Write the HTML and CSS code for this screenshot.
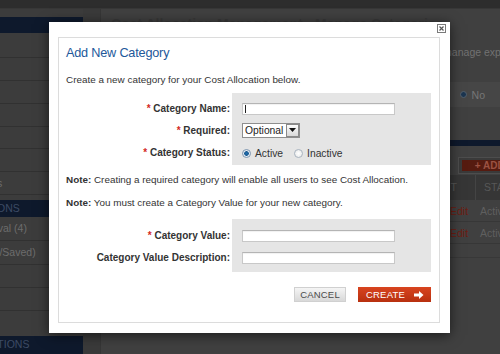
FILE: index.html
```html
<!DOCTYPE html>
<html lang="en">
<head>
<meta charset="utf-8">
<title>Add New Category</title>
<link rel="stylesheet" href="styles.css">
</head>
<body>
<div class="page" aria-hidden="true">
  <div class="topbar"></div>
  <div class="layout">
    <aside class="sidebar">
      <div class="nav-head"></div>
      <ul class="nav-list">
        <li class="nav-item tall">Home</li>
        <li class="nav-item">Expenses</li>
        <li class="nav-item">Reports</li>
        <li class="nav-item">Receipts</li>
        <li class="nav-item short">Settings</li>
        <li class="nav-item">Users</li>
        <li class="nav-item">All Categories</li>
      </ul>
      <div class="nav-head section">ADMIN ACTIONS</div>
      <ul class="nav-list">
        <li class="nav-item big">Needs Approval (4)</li>
        <li class="nav-item big">Draft (Unsent/Saved)</li>
        <li class="nav-item">Help</li>
        <li class="nav-item">Logout</li>
      </ul>
      <div class="nav-head section bottom">REPORT ACTIONS</div>
    </aside>
    <div class="gutter"></div>
    <main class="main">
      <h1 class="page-title">Cost Allocation Management - Manage Categories</h1>
      <p class="page-desc">Use Cost Allocation categories to group spending so you can track and manage expenses by project.</p>
      <div class="setting-row">
        <span>Require Cost Allocation:</span>
        <span class="opts"><span class="dot"></span>Yes <span class="dot on"></span>No</span>
      </div>
      <section class="cat-box">
        <div class="toolbar"><span class="add-frame"><span class="add-btn">+ ADD CATEGORY</span></span></div>
        <div class="table">
          <div class="th">CATEGORY</div><div class="th">REQUIRED</div><div class="th">EDIT</div><div class="th last">STATUS</div>
          <div class="td">Department</div><div class="td">Yes</div><div class="td edit">Edit</div><div class="td">Active</div>
          <div class="td">Project</div><div class="td">Optional</div><div class="td edit">Edit</div><div class="td">Active</div>
        </div>
      </section>
    </main>
  </div>
</div>

<div class="modal" role="dialog" aria-labelledby="dlg-title">
  <button class="close" type="button" aria-label="Close">
    <svg width="9" height="9" viewBox="0 0 9 9"><rect x="0.5" y="0.5" width="8" height="8" fill="#fff" stroke="#7a7a7a"/><path d="M2.5 2.5 L6.5 6.5 M6.5 2.5 L2.5 6.5" stroke="#555" stroke-width="1.2"/></svg>
  </button>
  <div class="modal-inner">
    <h2 class="modal-title" id="dlg-title">Add New Category</h2>
    <p class="intro">Create a new category for your Cost Allocation below.</p>

    <div class="form-block block-a">
      <label class="lbl"><span class="req">*</span> Category Name:</label>
      <div class="ctl"><span class="field focused"><input class="text-input" type="text"></span></div>
      <label class="lbl"><span class="req">*</span> Required:</label>
      <div class="ctl">
        <span class="select"><span class="select-value">Optional</span><span class="select-btn"><svg width="7" height="4" viewBox="0 0 7 4"><path d="M0 0 H7 L3.5 4 Z" fill="#111"/></svg></span></span>
      </div>
      <label class="lbl"><span class="req">*</span> Category Status:</label>
      <div class="ctl radios">
        <span class="radio on"></span><span class="radio-label">Active</span>
        <span class="radio"></span><span class="radio-label">Inactive</span>
      </div>
    </div>

    <p class="note first"><b>Note:</b> Creating a required category will enable all users to see Cost Allocation.</p>
    <p class="note"><b>Note:</b> You must create a Category Value for your new category.</p>

    <div class="form-block block-b">
      <label class="lbl"><span class="req">*</span> Category Value:</label>
      <div class="ctl"><span class="field"><input class="text-input" type="text"></span></div>
      <label class="lbl">Category Value Description:</label>
      <div class="ctl"><span class="field"><input class="text-input" type="text"></span></div>
    </div>

    <div class="actions">
      <button class="btn btn-cancel" type="button">CANCEL</button>
      <button class="btn btn-create" type="button">CREATE
        <svg width="10" height="8" viewBox="0 0 10 8"><path d="M0 2.4 H5 V0 L9.5 4 L5 8 V5.6 H0 Z" fill="#fff"/></svg>
      </button>
    </div>
  </div>
</div>
</body>
</html>
```

FILE: styles.css
```css
* { box-sizing: border-box; margin: 0; padding: 0; }
html, body { width: 500px; height: 354px; overflow: hidden; }
body {
  position: relative;
  background: #404040;
  font-family: "Liberation Sans", Arial, sans-serif;
  font-size: 9.9px;
  color: #333;
}

/* ---------- dimmed page behind the dialog ---------- */
.topbar { height: 9px; background: #2d2d2d; border-bottom: 1px solid #373737; }
.layout { display: flex; height: 345px; }

.sidebar {
  flex: none;
  width: 160px;
  margin-left: -77px;
  padding-top: 8px;
  background: #3c3c3c;
  color: #6c6c6c;
  font-size: 10.5px;
}
.nav-list { list-style: none; }
.nav-head { height: 16px; background: #0e192c; }
.nav-head.section {
  margin-top: 5px;
  height: 17px;
  line-height: 17px;
  padding-left: 14px;
  color: #3d4b64;
}
.nav-head.bottom { margin-top: 25px; height: 20px; }
.nav-item {
  height: 23px;
  line-height: 22px;
  padding-left: 14px;
  border-bottom: 1px solid #313131;
  white-space: nowrap;
}
.nav-item.tall { height: 25px; line-height: 24px; }
.nav-item.short { height: 22px; line-height: 21px; }
.nav-item.big { height: 24px; line-height: 23px; }

.gutter { flex: none; width: 17px; background: #3a3a3a; }

.main {
  flex: none;
  width: 480px;
  background: #404040;
  border-left: 1px solid #363636;
  padding-left: 10px;
  color: #727272;
  font-size: 10.5px;
}
.page-title {
  margin-top: 6px;
  font-size: 14px;
  line-height: 18px;
  color: #383838;
  white-space: nowrap;
}
.page-desc { margin-top: 13px; line-height: 13px; white-space: nowrap; }
.setting-row {
  margin-top: 23px;
  margin-left: -10px;
  height: 25px;
  background: #464646;
  display: flex;
  align-items: center;
  justify-content: space-between;
  padding: 0 95px 0 20px;
  color: #767676;
}
.opts { display: flex; align-items: center; gap: 5px; }
.dot { width: 7px; height: 7px; border-radius: 50%; background: #4a4a4a; border: 1px solid #5a5a5a; margin-left: 6px; }
.dot.on { background: #1b3550; border-color: #55616c; }

.cat-box { margin-top: 33px; margin-left: -10px; border-top: 6px solid #0e192c; padding-left: 10px; height: 118px; border-bottom: 1px solid #383838; }
.toolbar { display: flex; justify-content: flex-end; padding: 11px 5px 0 0; height: 29px; }
.add-frame {
  height: 17px;
  padding: 2px 3px;
  border: 1px solid #4d4d4d;
  background: #3a3a3a;
}
.add-btn {
  display: block;
  height: 11px;
  line-height: 11px;
  padding: 0 8px 0 13px;
  background: #561b10;
  color: #9c5242;
  font-weight: bold;
  font-size: 10px;
}
.table { display: grid; grid-template-columns: 189px 125px 51px 105px; }
.th {
  height: 25px;
  line-height: 25px;
  background: #363636;
  color: #585858;
  padding-left: 8px;
  border-right: 1px solid #444;
}
.th.last { padding-left: 8px; border-right: 0; }
.td {
  height: 22px;
  line-height: 22px;
  padding-left: 4px;
  border-bottom: 1px solid #373737;
  color: #5f5f5f;
}
.td.edit { padding-left: 25px; color: #6e1d12; }

/* ---------- dialog ---------- */
.modal {
  position: absolute;
  left: 49px;
  top: 22px;
  width: 401px;
  height: 311px;
  background: #fff;
  box-shadow: 0 2px 12px rgba(0, 0, 0, 0.6);
  padding: 15px 10px 10px 9px;
}
.close {
  position: absolute;
  left: 388px;
  top: 2px;
  width: 9px;
  height: 9px;
  border: 0;
  background: none;
  display: block;
}
.close svg { display: block; }
.modal-inner {
  height: 100%;
  border: 1px solid #dcdcdc;
  padding: 7px 0 0 7px;
}
.modal-title {
  font-size: 12.7px;
  letter-spacing: -0.2px;
  line-height: 16px;
  font-weight: normal;
  color: #22589a;
}
.intro { margin-top: 12px; line-height: 13px; }

.form-block {
  width: 365px;
  display: grid;
  grid-template-columns: 166px 199px;
  grid-auto-rows: 22px;
  background: linear-gradient(to right, transparent 166px, #e5e5e5 166px);
}
.block-a { margin-top: 7px; padding: 5px 0 1px; }
.block-b { margin-top: 10px; padding: 6px 0 3px; }
.lbl {
  text-align: right;
  padding-right: 2px;
  font-weight: bold;
  font-size: 10px;
  line-height: 22px;
  color: #333;
  white-space: nowrap;
}
.req { color: #d42a1f; }
.ctl { padding-left: 10px; display: flex; align-items: center; }

.field { position: relative; display: block; }
.text-input {
  display: block;
  width: 153px;
  height: 12px;
  border: 1px solid #c8c8c8;
  border-top-color: #b4b4b4;
  background: #fff;
  box-shadow: inset 0 1px 1px rgba(0, 0, 0, 0.06);
  outline: none;
}
.focused::after {
  content: "";
  position: absolute;
  left: 3px;
  top: 2px;
  width: 1px;
  height: 8px;
  background: #222;
}

.select {
  display: flex;
  align-items: center;
  width: 58px;
  height: 15px;
  border: 1px solid #8e8e8e;
  background: #fff;
  margin-top: -2px;
}
.select-value { flex: 1; padding-left: 2px; line-height: 13px; font-size: 10.3px; color: #222; }
.select-btn {
  width: 13px;
  height: 13px;
  border: 1px solid #8a8a8a;
  background: linear-gradient(#fdfdfd, #d8d8d8);
  display: flex;
  align-items: center;
  justify-content: center;
}
.select-btn svg { display: block; }

.radios { gap: 0; }
.radio {
  width: 9px;
  height: 9px;
  border-radius: 50%;
  border: 1px solid #a9b4c0;
  background: radial-gradient(circle, #fff 0, #e6e6e6 100%);
  margin-right: 4px;
}
.radio.on {
  border-color: #7d96b0;
  background: radial-gradient(circle, #1c6fb0 0, #1c5a92 2px, #dfe8f1 2.6px, #f4f7fa 100%);
}
.radio-label { margin-right: 11px; color: #333; font-size: 10.3px; }

.note { line-height: 13px; }
.note.first { margin-top: 8px; }
.note + .note { margin-top: 10px; }
.note b { color: #333; }

.actions {
  width: 365px;
  margin-top: 15px;
  display: flex;
  justify-content: flex-end;
  gap: 12px;
}
.btn {
  height: 15px;
  border: 0;
  font-family: "Liberation Sans", Arial, sans-serif;
  font-size: 9.5px;
  letter-spacing: 0.2px;
  display: flex;
  align-items: center;
  justify-content: center;
}
.btn-cancel {
  width: 52px;
  color: #4a4a4a;
  background: linear-gradient(#f7f7f7, #d6d6d6);
  box-shadow: inset 0 0 0 1px #d0d0d0;
}
.btn-create {
  width: 73px;
  color: #fff;
  background: linear-gradient(#d8441f, #b8300f);
  gap: 9px;
  padding-left: 1px;
}
.btn-create svg { display: block; }
```
